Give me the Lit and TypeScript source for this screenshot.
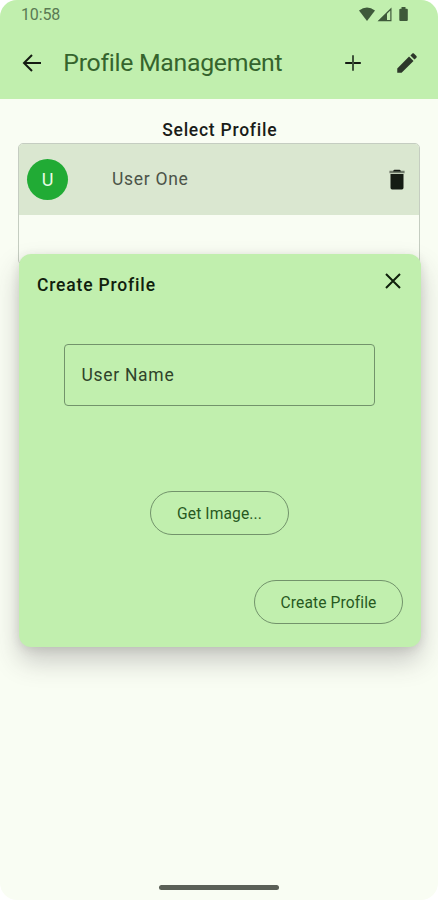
import { LitElement, html, css } from "lit";
import { customElement } from "lit/decorators.js";

@customElement("app-root")
export class AppRoot extends LitElement {
  static styles = css`
    :host {
      display: block;
      height: 900px;
      background: #fff;
      font-family: Roboto, "Liberation Sans", sans-serif;
    }
    * { box-sizing: border-box; }
    svg { display: block; }
    button {
      font: inherit;
      color: inherit;
      background: none;
      border: 0;
      padding: 0;
    }
    .screen {
      position: relative;
      display: flex;
      flex-direction: column;
      width: 438px;
      height: 900px;
      overflow: hidden;
      border-radius: 17px;
      background: #f9fdf3;
    }
    .top { height: 98.5px; background: #c1efae; }
    .status {
      display: flex;
      justify-content: space-between;
      height: 28px;
      padding: 0 29px 0 21px;
      align-items: center;
      color: #5a7a53;
    }
    .clock { font-size: 16px; line-height: 28px; letter-spacing: -0.15px; padding-top: 1px; }
    .bar {
      display: flex;
      align-items: center;
      height: 70px;
      padding: 0 18px 0 19px;
      color: #151c13;
    }
    .title {
      margin: 0 0 0 18.3px;
      flex: 1;
      font-size: 24.8px;
      font-weight: 400;
      line-height: 32px;
      letter-spacing: -0.28px;
      color: #35642d;
      white-space: nowrap;
    }
    .add { margin-right: 28px; }
    .heading {
      margin: 0;
      padding: 19.5px 0 0 1.5px;
      height: 44.5px;
      text-align: center;
      font-size: 17.5px;
      line-height: 24px;
      font-weight: 500;
      letter-spacing: 0.75px;
      color: #1a1c19;
    }
    .list {
      margin: 0 18px;
      height: 122px;
      border: 1px solid #c5cdc1;
      border-radius: 5px;
      overflow: hidden;
    }
    .row {
      display: flex;
      align-items: center;
      height: 71px;
      padding: 0 9px 0 8px;
      background: #dae7d0;
    }
    .avatar {
      width: 41px;
      height: 41px;
      border-radius: 50%;
      background: #21ab35;
      color: #e9fbe6;
      font-size: 18px;
      line-height: 41px;
      text-align: center;
    }
    .name {
      flex: 1;
      margin: -2px 0 0 44px;
      font-size: 17.5px;
      letter-spacing: 0.7px;
      color: #4b5448;
    }
    .dialog {
      position: absolute;
      left: 18.5px;
      top: 254px;
      width: 402px;
      height: 393px;
      display: flex;
      flex-direction: column;
      border-radius: 12px;
      background: #c1efae;
      box-shadow: 0 14px 26px rgba(60, 50, 60, 0.25), 0 2px 10px rgba(60, 50, 60, 0.12);
    }
    .dialog-head {
      display: flex;
      justify-content: space-between;
      height: 89.5px;
      padding: 15px 15.5px 0 18.5px;
    }
    .dialog-title {
      margin: 4px 0 0;
      font-size: 17.5px;
      line-height: 24px;
      font-weight: 500;
      letter-spacing: 0.82px;
      color: #10200c;
    }
    .close { height: 24px; color: #10200c; }
    .field {
      margin: 0 45.5px 0 45px;
      height: 62.5px;
      border: 1px solid #72936b;
      border-radius: 4px;
      padding-left: 17px;
      line-height: 60.5px;
      font-size: 17.5px;
      letter-spacing: 0.7px;
      color: #2f432a;
    }
    .pill {
      height: 44px;
      border: 1px solid #72936b;
      border-radius: 22px;
      padding-top: 1px;
      font-size: 15.6px;
      font-weight: 400;
      letter-spacing: 0.1px;
      color: #27591f;
    }
    .pick { width: 139px; margin: 85px 0 0 131.5px; }
    .create { width: 149px; margin: 45px 17.5px 0 auto; }
    .handle {
      width: 120px;
      height: 5px;
      border-radius: 3px;
      background: #5b6057;
      margin: auto auto 10.5px;
    }
  `;

  render() {
    return html`
      <div class="screen">
        <header class="top">
          <div class="status">
            <span class="clock">10:58</span>
            <svg width="50" height="16" viewBox="0 0 50 16" fill="#3e593a">
              <path d="M0 4.600Q8 -1.600 16 4.600L8 15Z" />
              <path d="M32.500 1.500V15.200H18.500ZM31.300 4.500L28 7.700V14H31.300Z" fill-rule="evenodd" />
              <path d="M42.500 1h4v1.700h1.300q1 0 1 1v10.300q0 1-1 1h-6.500q-1 0-1-1V3.700q0-1 1-1h1.200z" />
            </svg>
          </div>
          <div class="bar">
            <button aria-label="Back">
              <svg width="26" height="26" viewBox="0 0 26 26" fill="none" stroke="currentColor" stroke-width="2">
                <path d="M22 13H5.500M13 5L5 13l8 8" />
              </svg>
            </button>
            <h1 class="title">Profile Management</h1>
            <button class="add" aria-label="Add">
              <svg width="26" height="26" viewBox="0 0 26 26" fill="none" stroke="currentColor" stroke-width="2">
                <path d="M5.200 13h15.600" />
                <path d="M13 5.200v15.600" stroke="#3e533a" />
              </svg>
            </button>
            <button aria-label="Edit">
              <svg width="26" height="26" viewBox="0 0 24 24" fill="#2d372a">
                <path d="M3 17v4h4L18 10.100l-4.100-4.100L3 17zM20.710 7.040c.39-.39.39-1.020 0-1.410l-2.340-2.340c-.39-.39-1.020-.39-1.410 0l-1.830 1.830 3.750 3.750 1.830-1.830z" />
              </svg>
            </button>
          </div>
        </header>
        <h2 class="heading">Select Profile</h2>
        <section class="list">
          <div class="row">
            <span class="avatar">U</span>
            <span class="name">User One</span>
            <button aria-label="Delete">
              <svg width="26" height="26" viewBox="0 1 24 24" fill="#151b14">
                <path d="M6 7.500v12.500c0 1.100.5 1.800 1.600 1.800h8.800c1.100 0 1.600-.7 1.600-1.800V7.500z" />
                <path d="M5 4.500h14v2.200H5z" fill="#6f796a" />
                <path d="M8.500 4.500l1-1h5l1 1v.7h-7z" />
              </svg>
            </button>
          </div>
        </section>
        <section class="dialog">
          <div class="dialog-head">
            <h2 class="dialog-title">Create Profile</h2>
            <button class="close" aria-label="Close">
              <svg width="24" height="24" viewBox="0 0 24 24" fill="none" stroke="currentColor" stroke-width="2">
                <path d="M5 5l14 14M19 5L5 19" />
              </svg>
            </button>
          </div>
          <div class="field">User Name</div>
          <button class="pill pick">Get Image...</button>
          <button class="pill create">Create Profile</button>
        </section>
        <div class="handle"></div>
      </div>
    `;
  }
}
